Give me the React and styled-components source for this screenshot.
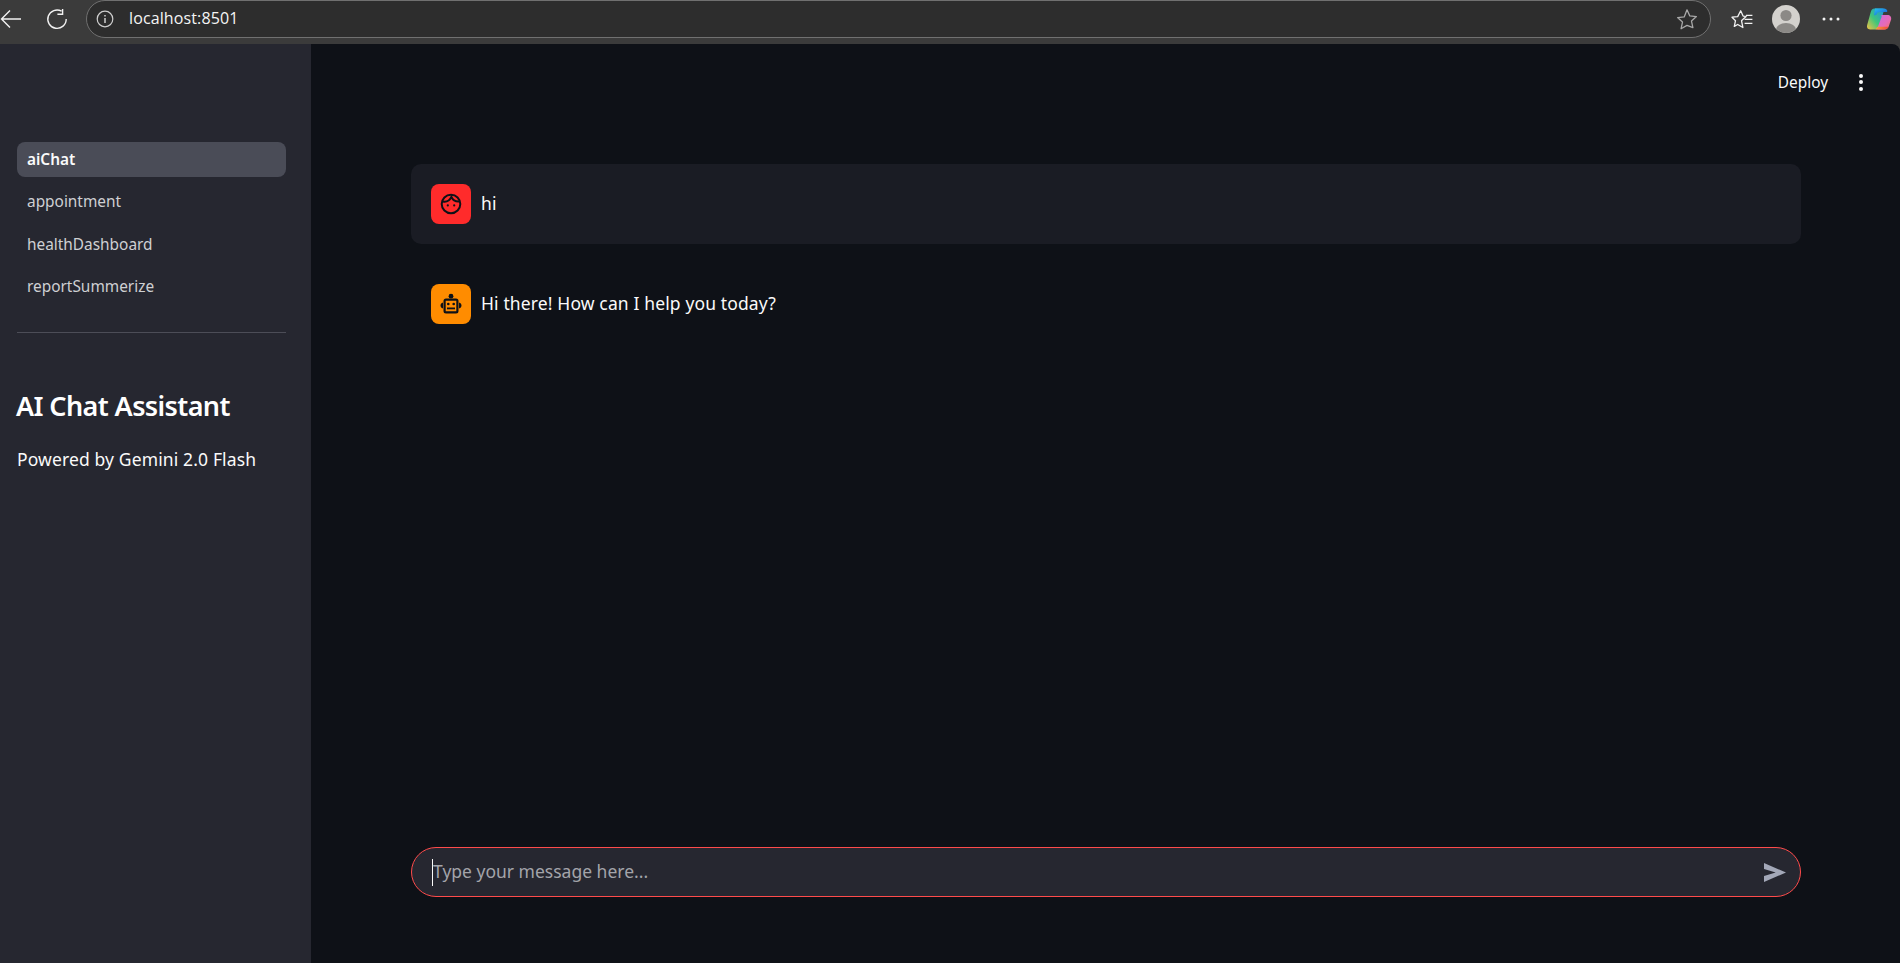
import React from 'react';
import styled, { createGlobalStyle } from 'styled-components';

const GlobalStyle = createGlobalStyle`
  html, body {
    margin: 0;
    padding: 0;
    height: 100%;
    background: #3b3b3b;
    overflow: hidden;
  }
  * { box-sizing: border-box; }
`;

const Page = styled.div`
  width: 1900px;
  height: 963px;
  display: flex;
  flex-direction: column;
  font-family: "Noto Sans", "Open Sans", sans-serif;
  color: #fafafa;
  background: #3b3b3b;
`;

const BrowserBar = styled.div`
  height: 44px;
  display: flex;
  align-items: flex-start;
  flex-shrink: 0;
`;

const BarIcon = styled.div`
  width: ${p => p.$w}px;
  height: 38px;
  margin-left: ${p => p.$ml || 0}px;
  display: flex;
  align-items: center;
  justify-content: center;
  flex-shrink: 0;
`;

const AddressPill = styled.div`
  width: 1625px;
  height: 38px;
  margin-left: 18px;
  border: 1px solid #707070;
  border-radius: 19px;
  background: #2d2d2d;
  display: flex;
  align-items: center;
  padding: 0 12px 0 9px;
`;

const AddressText = styled.span`
  margin: -2px 0 0 15px;
  font-family: "Open Sans", sans-serif;
  font-size: 16px;
  letter-spacing: 0.12px;
  color: #f5f5f5;
  flex: 1;
`;

const Body = styled.div`
  flex: 1;
  display: flex;
  min-height: 0;
`;

const Sidebar = styled.aside`
  width: 311px;
  background: #262730;
  padding: 98px 25px 0 17px;
  flex-shrink: 0;
`;

const NavList = styled.nav`
  display: flex;
  flex-direction: column;
  gap: 7.5px;
`;

const NavItem = styled.div`
  height: 35px;
  padding: 0 0 1px 10px;
  display: flex;
  align-items: center;
  border-radius: 8px;
  font-size: 15.4px;
  font-weight: ${p => (p.$active ? 600 : 400)};
  background: ${p => (p.$active ? '#4a4c57' : 'transparent')};
  color: ${p => (p.$active ? '#fafafa' : '#cfd0d3')};
`;

const Divider = styled.hr`
  margin: 27px 0 0;
  border: 0;
  border-top: 1px solid #4c4d57;
`;

const SideTitle = styled.h2`
  margin: 52px 0 0 -1px;
  font-size: 27px;
  line-height: 42px;
  font-weight: 600;
  letter-spacing: -0.6px;
  color: #fff;
`;

const SideNote = styled.p`
  margin: 18px 0 0;
  font-size: 17.5px;
  line-height: 28px;
  letter-spacing: 0.13px;
  color: #fafafa;
`;

const Main = styled.main`
  flex: 1;
  display: flex;
  flex-direction: column;
  background: #0e1117;
  border-top-right-radius: 8px;
  min-width: 0;
`;

const TopRow = styled.div`
  height: 76px;
  display: flex;
  align-items: center;
  justify-content: flex-end;
  padding: 0 37px 0 0;
`;

const DeployLabel = styled.span`
  font-size: 15.4px;
  color: #fafafa;
  margin-right: 31px;
`;

const Kebab = styled.div`
  display: flex;
  flex-direction: column;
  gap: 2.5px;
`;

const Dot = styled.i`
  display: block;
  width: 4px;
  height: 4px;
  border-radius: 50%;
  background: #fafafa;
`;

const Thread = styled.div`
  flex: 1;
  padding: 44px 99px 0 100px;
  display: flex;
  flex-direction: column;
  gap: 20px;
`;

const Message = styled.div`
  height: 80px;
  padding: 20px;
  display: flex;
  gap: 10px;
  border-radius: 10px;
  background: ${p => (p.$user ? '#1a1c24' : 'transparent')};
`;

const Avatar = styled.div`
  width: 40px;
  height: 40px;
  border-radius: 8px;
  background: ${p => p.$bg};
  display: flex;
  align-items: center;
  justify-content: center;
  flex-shrink: 0;
`;

const MessageText = styled.div`
  font-size: 17.5px;
  line-height: 38px;
  letter-spacing: 0.13px;
  color: #fafafa;
`;

const Composer = styled.div`
  height: 50px;
  margin: 0 99px 66px 100px;
  border: 1px solid #ff4b4b;
  border-radius: 25px;
  background: #262730;
  display: flex;
  align-items: center;
  padding: 0 14px 0 20px;
`;

const Caret = styled.i`
  display: block;
  width: 1px;
  height: 27px;
  background: #fafafa;
`;

const Placeholder = styled.span`
  flex: 1;
  margin-top: -3px;
  font-size: 17.5px;
  color: #a3a4aa;
`;

const BackIcon = () => (
  <svg width="22" height="22" viewBox="0 0 22 22" fill="none" stroke="#f2f2f2" strokeWidth="1.4">
    <path d="M21 11H1.500M10 2.500 1.500 11l8.500 8.500" />
  </svg>
);

const ReloadIcon = () => (
  <svg width="22" height="22" viewBox="0 0 22 22" fill="none" stroke="#f2f2f2" strokeWidth="1.4">
    <path d="M15.600 3.200A9.200 9.200 0 1 0 20.200 11" />
    <path d="M16.600 1v5.200h-5.200" />
  </svg>
);

const InfoIcon = () => (
  <svg width="18" height="18" viewBox="0 0 18 18" fill="none" stroke="#cfcfcf" strokeWidth="1.2">
    <circle cx="9" cy="9" r="7.800" />
    <path d="M9 8v5" strokeWidth="1.500" />
    <path d="M9 5v1.500" strokeWidth="1.500" />
  </svg>
);

const StarIcon = () => (
  <svg width="22" height="22" viewBox="0 0 22 22" fill="none" stroke="#a8a8a8" strokeWidth="1.3" strokeLinejoin="round">
    <path d="M11 1.800l2.800 6.100 6.600.7-4.900 4.500 1.400 6.600L11 17.400l-5.900 3.300 1.400-6.600-4.900-4.500 6.600-.7z" />
  </svg>
);

const FavoritesIcon = () => (
  <svg width="22" height="22" viewBox="0 0 22 22" fill="none" stroke="#f2f2f2" strokeWidth="1.3" strokeLinejoin="round">
    <path d="M9.700 2.800l2.400 5.300 3 .3-3.600 3.300-1 1 1.400 6.800-5.200-3-3.400 1.900 1.200-5.700L1 9.200l5.700-.6z" />
    <path d="M15 7.400h6.400M13.600 11.400h7.800M13.600 15.400h7.800" />
  </svg>
);

const ProfileIcon = () => (
  <svg width="28" height="28" viewBox="0 0 28 28">
    <defs>
      <clipPath id="profileClip"><circle cx="14" cy="14" r="14" /></clipPath>
    </defs>
    <g clipPath="url(#profileClip)">
      <rect width="28" height="28" fill="#d3d1cd" />
      <circle cx="14" cy="10.500" r="5.600" fill="#8b8986" />
      <ellipse cx="14" cy="24.500" rx="10" ry="6.500" fill="#8b8986" />
    </g>
  </svg>
);

const MoreIcon = () => (
  <svg width="18" height="6" viewBox="0 0 18 6" fill="#f2f2f2">
    <circle cx="2" cy="3" r="1.500" />
    <circle cx="9" cy="3" r="1.500" />
    <circle cx="16" cy="3" r="1.500" />
  </svg>
);

const CopilotLogo = () => (
  <svg width="26" height="26" viewBox="0 0 26 26">
    <defs>
      <linearGradient id="copA" x1="0" y1="1" x2="1" y2="0">
        <stop offset="0" stopColor="#f6c343" />
        <stop offset="0.45" stopColor="#3fc67a" />
        <stop offset="1" stopColor="#1c8fe8" />
      </linearGradient>
      <linearGradient id="copB" x1="0" y1="0" x2="1" y2="1">
        <stop offset="0" stopColor="#c86ae6" />
        <stop offset="0.6" stopColor="#e76bb6" />
        <stop offset="1" stopColor="#f7705a" />
      </linearGradient>
      <linearGradient id="copC" x1="0" y1="0" x2="1" y2="1">
        <stop offset="0" stopColor="#25c4f0" />
        <stop offset="1" stopColor="#1a52d8" />
      </linearGradient>
      <linearGradient id="copD" x1="0" y1="0" x2="1" y2="0">
        <stop offset="0" stopColor="#f8a13c" />
        <stop offset="1" stopColor="#f0483e" />
      </linearGradient>
    </defs>
    <path d="M8.500 2.500h8c1.500 0 1.800 1.400 1.300 2.600l-4.400 15c-.5 1.900-1.600 3.400-4 3.400H4c-2.400 0-3.500-2-2.900-4.200L4.600 6.500C5.300 4 6.400 2.500 8.500 2.500z" fill="url(#copA)" />
    <path d="M9 2.500h9c1.800 0 3 1 3.400 2.600L21 6h-7.600c-1.800 0-2.400 1-2.800 2.500L8 9.500z" fill="url(#copC)" />
    <path d="M14.500 9h7c2.500 0 4.200 2 3.600 4.400l-2.200 6.700c-.8 2.300-2.200 3.400-4.200 3.400h-7c-.6 0-.8-.5-.4-1.200l4-10.500c.5-1.500 .8-2.800-.8-2.800z" fill="url(#copB)" />
    <path d="M9.500 23.500h9c1.800 0 3.200-1 4-2.800H12.500c-1 0-1.600.4-2 1.200z" fill="url(#copD)" />
  </svg>
);

const FaceIcon = () => (
  <svg width="24" height="24" viewBox="0 0 24 24" fill="none" stroke="#0e1117" strokeWidth="2">
    <circle cx="12" cy="12" r="9.300" />
    <path d="M4 9.500c3.500.6 6.500-.6 8.400-4.600 1.400 3.200 4 4.800 7.600 4.600" />
    <circle cx="8.800" cy="13.400" r="1.100" fill="#0e1117" stroke="none" />
    <circle cx="15.200" cy="13.400" r="1.100" fill="#0e1117" stroke="none" />
  </svg>
);

const RobotIcon = () => (
  <svg width="24" height="24" viewBox="0 0 24 24" fill="#0e1117">
    <circle cx="12" cy="4.200" r="2.400" />
    <path d="M1.500 13.500c0-1.500 1-2.700 2.500-3v6c-1.500-.3-2.500-1.500-2.500-3zM22.500 13.500c0-1.500-1-2.700-2.500-3v6c1.500-.3 2.500-1.500 2.500-3z" />
    <path fillRule="evenodd" d="M7 6.500h10a2.500 2.500 0 0 1 2.500 2.500v10a2.500 2.500 0 0 1-2.500 2.500H7A2.500 2.500 0 0 1 4.500 19V9A2.500 2.500 0 0 1 7 6.500zM6.700 8.700v10.600h10.600V8.700z" />
    <circle cx="9.300" cy="12" r="1.300" />
    <circle cx="14.700" cy="12" r="1.300" />
    <rect x="8" y="15.500" width="8" height="1.800" />
  </svg>
);

const SendIcon = () => (
  <svg width="22" height="19" viewBox="0 0 22 19" fill="#a3a8b8">
    <path d="M0 0 22 9.500 0 19V12.900L11.700 9.500 0 6.100z" />
  </svg>
);

const pages = ['aiChat', 'appointment', 'healthDashboard', 'reportSummerize'];

export default function App() {
  return (
    <Page>
      <GlobalStyle />
      <BrowserBar>
        <BarIcon $w={22} $ml={0}><BackIcon /></BarIcon>
        <BarIcon $w={22} $ml={24}><ReloadIcon /></BarIcon>
        <AddressPill>
          <InfoIcon />
          <AddressText>localhost:8501</AddressText>
          <StarIcon />
        </AddressPill>
        <BarIcon $w={22} $ml={20}><FavoritesIcon /></BarIcon>
        <BarIcon $w={28} $ml={19}><ProfileIcon /></BarIcon>
        <BarIcon $w={18} $ml={22}><MoreIcon /></BarIcon>
        <BarIcon $w={26} $ml={26}><CopilotLogo /></BarIcon>
      </BrowserBar>
      <Body>
        <Sidebar>
          <NavList>
            {pages.map((name, i) => (
              <NavItem key={name} $active={i === 0}>{name}</NavItem>
            ))}
          </NavList>
          <Divider />
          <SideTitle>AI Chat Assistant</SideTitle>
          <SideNote>Powered by Gemini 2.0 Flash</SideNote>
        </Sidebar>
        <Main>
          <TopRow>
            <DeployLabel>Deploy</DeployLabel>
            <Kebab><Dot /><Dot /><Dot /></Kebab>
          </TopRow>
          <Thread>
            <Message $user>
              <Avatar $bg="#ff2b2b"><FaceIcon /></Avatar>
              <MessageText>hi</MessageText>
            </Message>
            <Message>
              <Avatar $bg="#ff8c00"><RobotIcon /></Avatar>
              <MessageText>Hi there! How can I help you today?</MessageText>
            </Message>
          </Thread>
          <Composer>
            <Caret />
            <Placeholder>Type your message here...</Placeholder>
            <SendIcon />
          </Composer>
        </Main>
      </Body>
    </Page>
  );
}
